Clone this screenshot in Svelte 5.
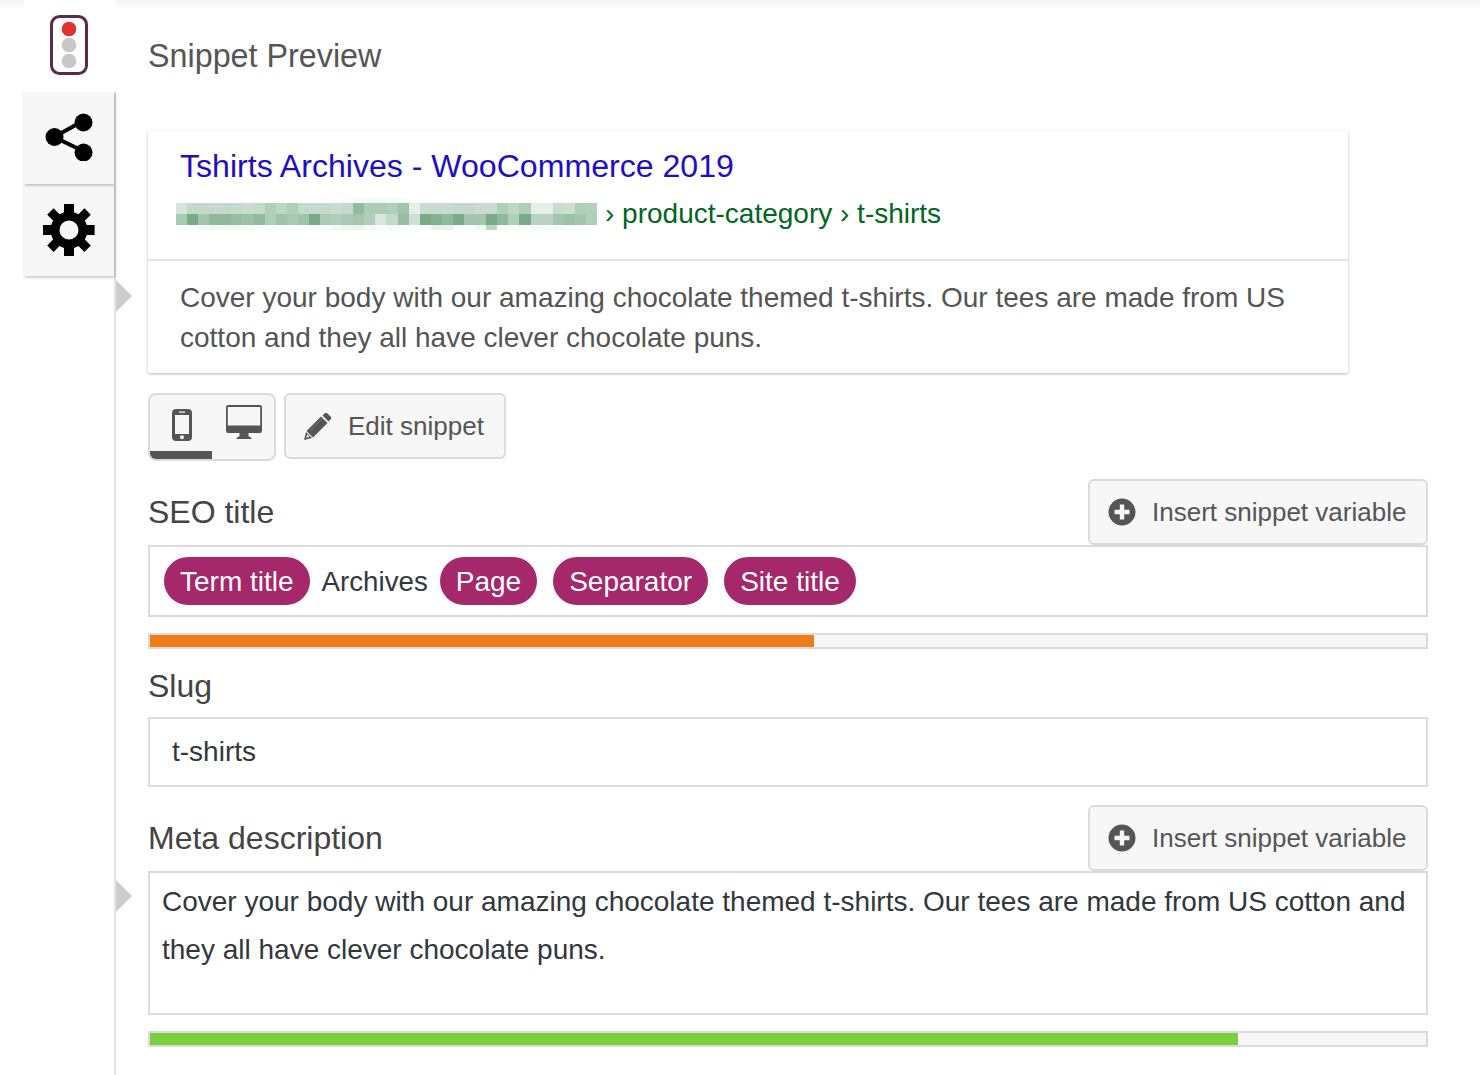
<script>
  // the blurred-out domain, drawn as pixel cells (alpha of the green per cell)
  const blurAbove = [0,0,0,0,0,0,0,0,0,0,0,0,0,0,0,.03,.04,.04,.04,.04,.03,0,0,0,0,0,0,0,0,0,0,0,0,0,0,0,0,0];
  const blurTop = [.2,.28,.28,.27,.28,.27,.25,.27,.36,.3,.36,.27,.27,.27,.25,.27,.5,.38,.38,.36,.43,.12,.26,.26,.26,.28,.28,.26,.26,.36,.3,.36,.12,.12,.26,.24,.36,.34];
  const blurBottom = [.4,.62,.42,.52,.52,.48,.46,.5,.36,.44,.4,.44,.62,.38,.36,.4,.42,.36,.18,.28,.48,.22,.62,.58,.52,.62,.42,.42,.62,.52,.36,.62,.32,.32,.42,.46,.42,.36];
  const blurBelow = [.01,0,.06,.06,.06,.06,.04,.02,.01,.01,.02,.01,.03,.01,.05,.08,.08,.04,.03,.03,.02,.01,.01,.1,.1,.02,.01,.06,.3,.03,.01,.02,.03,.03,.04,.02,.01,0];
</script>

<div class="page">
  <div class="tabs">
    <div class="tab active">
      <svg width="38" height="60" viewBox="0 0 38 60">
        <rect x="1.500" y="1.500" width="35" height="57" rx="8" fill="#fff" stroke="#5d2a47" stroke-width="3" />
        <circle cx="19" cy="14" r="7.300" fill="#e2302f" />
        <circle cx="19" cy="30" r="7.300" fill="#c8c8c8" />
        <circle cx="19" cy="46" r="7.300" fill="#c8c8c8" />
      </svg>
    </div>
    <div class="tab share">
      <svg width="48" height="48" viewBox="0 0 48 48">
        <path d="M9 24 L38 8 M9 24 L38 38" stroke="#000" stroke-width="4" fill="none" />
        <circle cx="9.500" cy="24" r="9" />
        <circle cx="38.500" cy="9.500" r="9" />
        <circle cx="38.500" cy="39.500" r="9" />
      </svg>
    </div>
    <div class="tab gear">
      <svg width="52" height="52" viewBox="0 0 52 52">
        <path fill-rule="evenodd" d="M21 0h10v8.300l4.500 1.900 5.900-5.900 6.400 6.400-5.900 5.900 1.900 4.400h7.800v10h-7.800l-1.900 4.600 5.900 5.900-6.400 6.400-5.900-5.900-4.500 1.900v8.100h-10v-8.100l-4.500-1.900-5.900 5.900-6.400-6.400 5.900-5.900-1.900-4.600h-8.200v-10h8.200l1.900-4.400-5.900-5.900 6.400-6.400 5.900 5.900 4.500-1.900zM26 16.500a9.500 9.500 0 1 0 0 19 9.500 9.500 0 0 0 0-19z" />
      </svg>
    </div>
    <span class="arrow first"></span>
    <span class="arrow second"></span>
  </div>

  <main class="content">
    <h2 class="section-title">Snippet Preview</h2>

    <section class="preview">
      <div class="preview-head">
        <div class="preview-title">Tshirts Archives - WooCommerce 2019</div>
        <div class="preview-url">
          <div class="blur" aria-hidden="true">
            <div class="blur-row edge">
              {#each blurAbove as a}<i style="background: rgba(38, 120, 62, {a})"></i>{/each}
            </div>
            <div class="blur-row">
              {#each blurTop as a}<i style="background: rgba(38, 120, 62, {a})"></i>{/each}
            </div>
            <div class="blur-row">
              {#each blurBottom as a}<i style="background: rgba(38, 120, 62, {a})"></i>{/each}
            </div>
            <div class="blur-row edge">
              {#each blurBelow as a}<i style="background: rgba(38, 120, 62, {a})"></i>{/each}
            </div>
          </div>
          <span>› product-category › t-shirts</span>
        </div>
      </div>
      <p class="preview-desc">Cover your body with our amazing chocolate themed t-shirts. Our tees are made from US cotton and they all have clever chocolate puns.</p>
    </section>

    <div class="preview-actions">
      <div class="mode-switch">
        <div class="mode selected">
          <svg width="20" height="32" viewBox="0 0 20 32">
            <path fill-rule="evenodd" fill="#555" d="M4 0h12a4 4 0 0 1 4 4v24a4 4 0 0 1-4 4H4a4 4 0 0 1-4-4V4a4 4 0 0 1 4-4zM3 6v19h14V6zM7 2.500v1.300h6V2.500zM10 26.300a2 2 0 1 0 0 4 2 2 0 0 0 0-4z" />
          </svg>
        </div>
        <div class="mode">
          <svg width="36" height="34" viewBox="0 0 36 34">
            <path fill-rule="evenodd" fill="#555" d="M2 0h32a2 2 0 0 1 2 2v24a2 2 0 0 1-2 2H22.500v3l3 2v1h-15v-1l3-2v-3H2a2 2 0 0 1-2-2V2a2 2 0 0 1 2-2zM1.800 2v18.500h32.400V2z" />
          </svg>
        </div>
      </div>
      <button type="button" class="btn edit">
        <svg width="28" height="28" viewBox="0 0 28 28">
          <path fill="#555" d="M20.500 1.500a2 2 0 0 1 3 0l3 3a2 2 0 0 1 0 3l-2 2-6-6z" />
          <path fill="#555" d="M17 4.500l6.500 6.500-14.500 14.500-6.500-6.500z" />
          <path fill="#555" fill-rule="evenodd" d="M2 20l6 6-8 2zM3.200 22.500l-1 3.300 3.300-1z" />
          <path d="M6 18.500L18.500 6.500" stroke="#777" stroke-width="1" fill="none" />
        </svg>
        Edit snippet
      </button>
    </div>

    <div class="label-row first-label">
      <span class="field-label">SEO title</span>
      <button type="button" class="btn insert">
        <svg width="28" height="28" viewBox="0 0 28 28">
          <path fill="#555" fill-rule="evenodd" d="M14 0.500a13.500 13.500 0 1 1 0 27 13.500 13.500 0 0 1 0-27zM11.800 6.500v5.300H6.500v4.400h5.300v5.300h4.400v-5.300h5.300v-4.400h-5.300V6.500z" />
        </svg>
        Insert snippet variable
      </button>
    </div>
    <div class="field seo">
      <span class="pill">Term title</span>
      <span class="plain">Archives</span>
      <span class="pill">Page</span>
      <span class="pill">Separator</span>
      <span class="pill">Site title</span>
    </div>
    <div class="progress"><div class="fill" style="width: 52%; background: #ee7c1b"></div></div>

    <div class="label-row slug-label">
      <span class="field-label">Slug</span>
    </div>
    <div class="field slug">t-shirts</div>

    <div class="label-row meta-label">
      <span class="field-label">Meta description</span>
      <button type="button" class="btn insert">
        <svg width="28" height="28" viewBox="0 0 28 28">
          <path fill="#555" fill-rule="evenodd" d="M14 0.500a13.500 13.500 0 1 1 0 27 13.500 13.500 0 0 1 0-27zM11.800 6.500v5.300H6.500v4.400h5.300v5.300h4.400v-5.300h5.300v-4.400h-5.300V6.500z" />
        </svg>
        Insert snippet variable
      </button>
    </div>
    <div class="field meta">Cover your body with our amazing chocolate themed t-shirts. Our tees are made from US cotton and they all have clever chocolate puns.</div>
    <div class="progress"><div class="fill" style="width: 85.300%; background: #7ad03a"></div></div>
  </main>
</div>

<style>
  :global(body) {
    margin: 0;
    background: #fff;
    font-family: "Liberation Sans", Arial, sans-serif;
    color: #444;
  }

  .page {
    display: flex;
    height: 1075px;
    overflow: hidden;
    position: relative;
    background: linear-gradient(#f4f4f4, #fff 10px);
  }

  .tabs {
    position: relative;
    width: 90px;
    margin-left: 24px;
    flex-shrink: 0;
    border-right: 2px solid #e5e5e5;
    box-sizing: content-box;
    background: #fff;
  }

  .tab {
    height: 92px;
    width: 90px;
    display: flex;
    align-items: center;
    justify-content: center;
    background: #f7f7f7;
    box-shadow: 1px 1px 3px rgba(0, 0, 0, 0.3);
    box-sizing: border-box;
    position: relative;
  }

  .tab.active {
    width: 92px;
    background: #fff;
    box-shadow: none;
    z-index: 3;
    padding-right: 2px;
    padding-bottom: 2px;
  }

  .tab.share {
    z-index: 2;
    padding-bottom: 3px;
  }

  .tab.gear {
    z-index: 1;
  }

  .arrow {
    position: absolute;
    left: 92px;
    width: 0;
    height: 0;
    border-left: 16px solid #ccc;
    border-top: 16px solid transparent;
    border-bottom: 16px solid transparent;
  }
  .arrow.first { top: 280px; }
  .arrow.second { top: 880px; }

  .content {
    width: 1280px;
    margin-left: 32px;
    flex-shrink: 0;
  }

  .section-title {
    margin: 0;
    height: 112px;
    line-height: 112px;
    font-size: 32.300px;
    font-weight: 400;
    color: #555;
    padding-bottom: 19px;
    box-sizing: content-box;
  }

  .preview {
    width: 1200px;
    height: 242px;
    background: #fff;
    border-radius: 2px;
    box-shadow: 0 1px 3px rgba(0, 0, 0, 0.28);
    box-sizing: border-box;
  }

  .preview-head {
    height: 130px;
    padding: 0 32px;
    border-bottom: 2px solid #e4e4e4;
    box-sizing: border-box;
  }

  .preview-title {
    padding-top: 15px;
    font-size: 32.100px;
    line-height: 40px;
    color: #1e0fc4;
  }

  .preview-url {
    display: flex;
    align-items: center;
    margin-top: 8px;
    height: 40px;
    font-size: 28px;
    color: #006621;
  }

  .blur {
    width: 421px;
    margin-left: -4px;
    margin-right: 8px;
    flex-shrink: 0;
  }

  .blur-row {
    display: flex;
    height: 11px;
  }

  .blur-row.edge {
    height: 5px;
  }

  .blur-row i {
    flex: 1;
  }

  .preview-desc {
    margin: 0;
    padding: 17px 32px 0;
    font-size: 28px;
    line-height: 40px;
    color: #545454;
  }

  .preview-actions {
    display: flex;
    align-items: flex-start;
    gap: 8px;
    margin-top: 20px;
  }

  .mode-switch {
    display: flex;
    width: 128px;
    height: 68px;
    background: #f7f7f7;
    border: 2px solid #dbdbdb;
    border-radius: 8px;
    box-sizing: border-box;
    overflow: hidden;
  }

  .mode {
    width: 62px;
    display: flex;
    justify-content: center;
    padding: 14px 0 0 2px;
    box-sizing: border-box;
  }

  .mode + .mode {
    padding-top: 10px;
  }

  .mode.selected {
    border-bottom: 8px solid #555;
  }

  .btn {
    display: flex;
    align-items: center;
    background: #f7f7f7;
    border: 2px solid #dbdbdb;
    border-radius: 6px;
    box-sizing: border-box;
    font-family: inherit;
    font-size: 26px;
    color: #555;
    padding: 0;
  }

  .edit {
    width: 222px;
    height: 66px;
    padding-left: 18px;
    gap: 16px;
  }

  .insert {
    width: 340px;
    height: 66px;
    padding-left: 18px;
    gap: 16px;
  }

  .label-row {
    display: flex;
    align-items: center;
    justify-content: space-between;
  }

  .first-label { margin-top: 18px; }
  .slug-label { height: 68px; padding-top: 6px; box-sizing: border-box; }
  .meta-label { margin-top: 18px; }

  .field-label {
    font-size: 32px;
    color: #444;
  }

  .field {
    border: 2px solid #dbdbdb;
    box-sizing: border-box;
    background: #fff;
    font-size: 28px;
    color: #32373c;
  }

  .seo {
    height: 72px;
    display: flex;
    align-items: center;
    padding-left: 14px;
    gap: 16px;
  }

  .pill {
    height: 48px;
    line-height: 50px;
    padding: 0 16px;
    border-radius: 24px;
    background: #a4286a;
    color: #fff;
    font-size: 28px;
  }

  .plain {
    margin: 2px -4px 0;
    font-size: 27.700px;
  }

  .slug {
    height: 70px;
    line-height: 66px;
    padding-left: 22px;
  }

  .meta {
    height: 144px;
    padding: 5px 12px 0;
    line-height: 48px;
  }

  .progress {
    height: 16px;
    margin-top: 16px;
    border: 2px solid #dbdbdb;
    background: #f7f7f7;
    box-sizing: border-box;
  }

  .fill {
    height: 100%;
  }
</style>
